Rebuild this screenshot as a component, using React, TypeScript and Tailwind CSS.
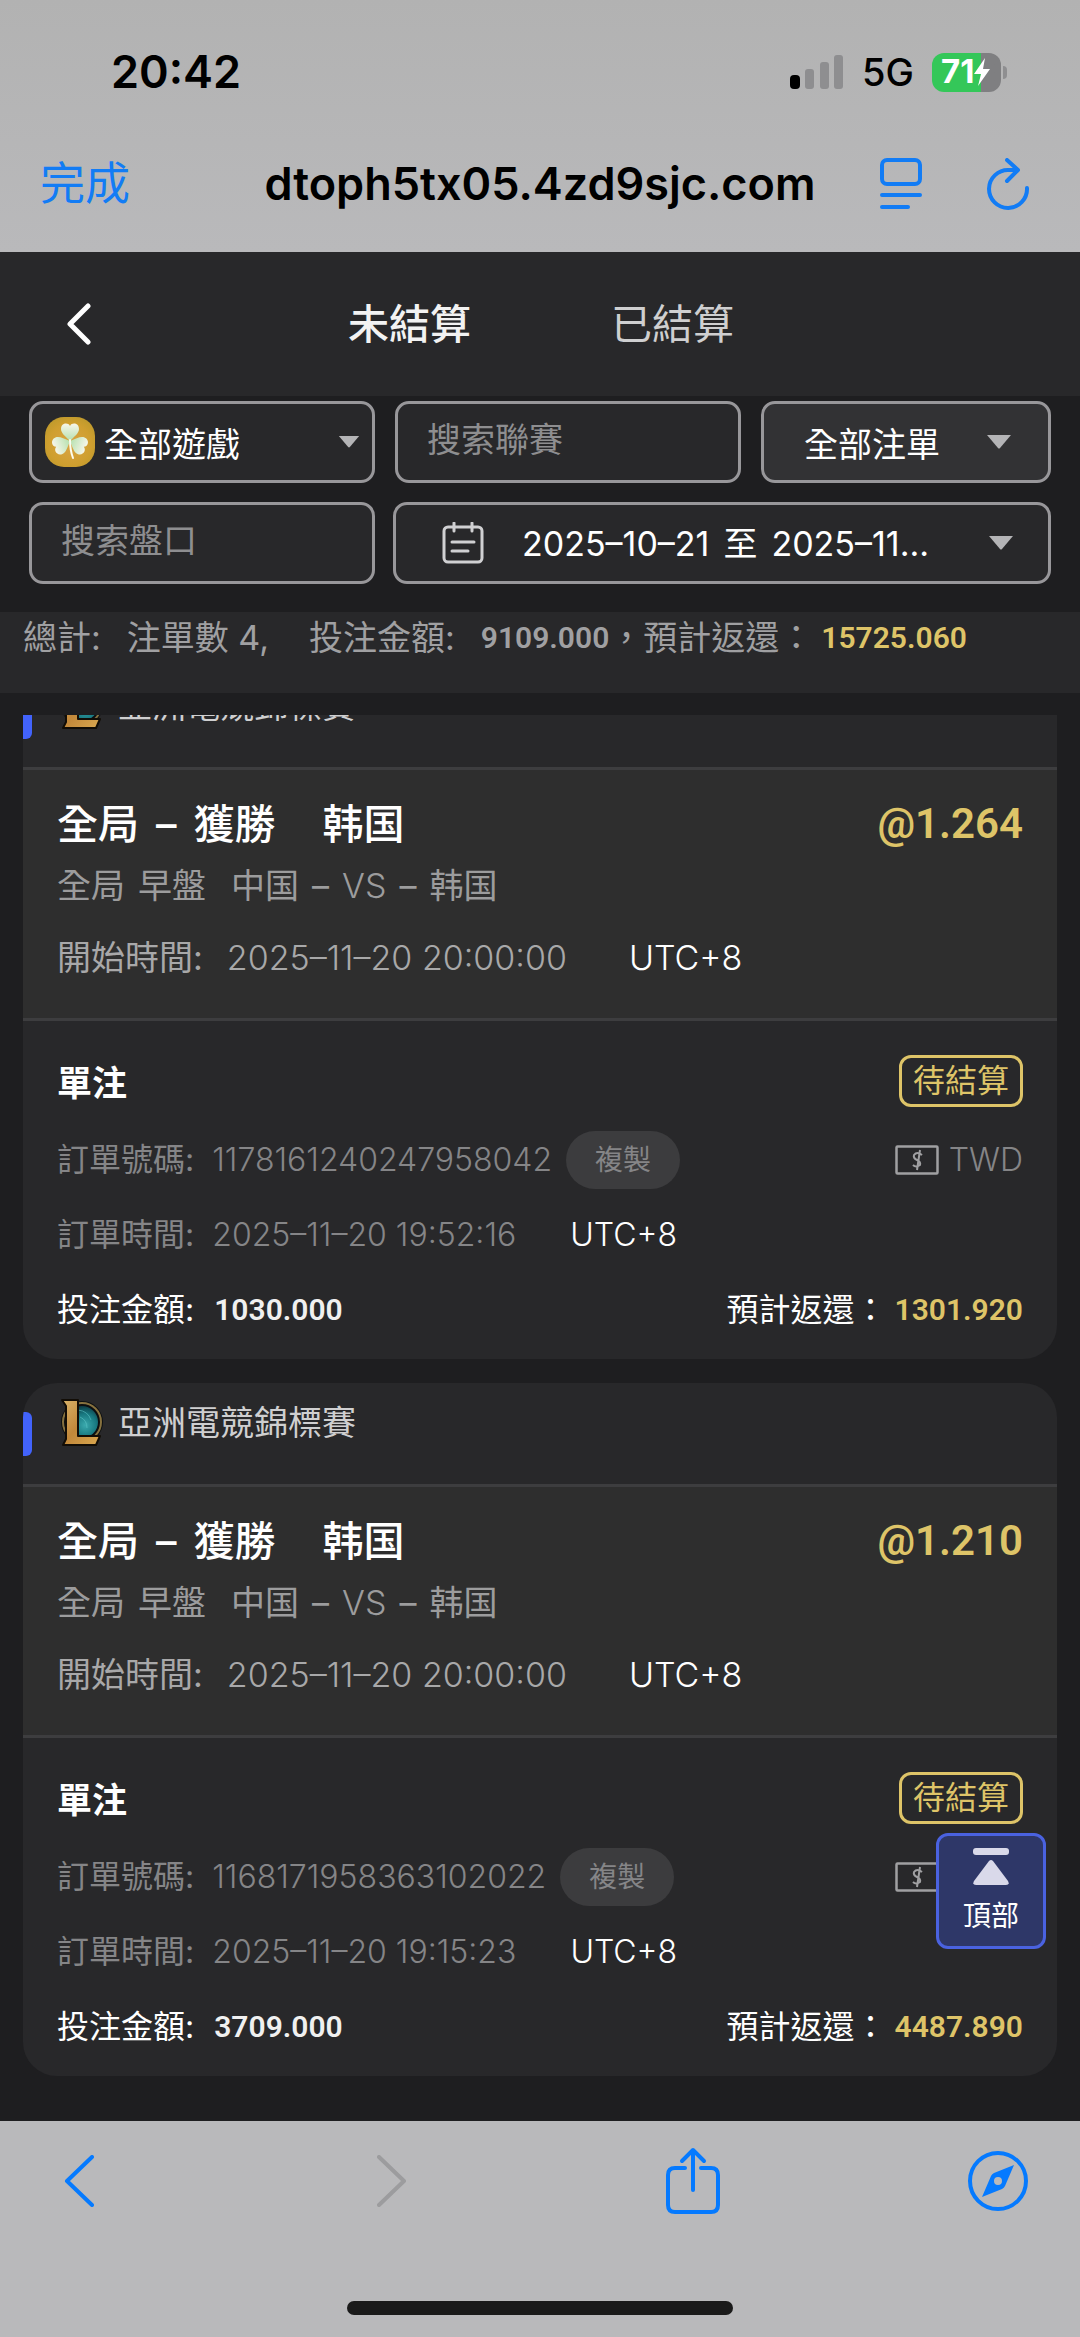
import React from "react";

type Bet = {
    id: string;
    odds: string;
    orderTime: string;
    amount: string;
    payout: string;
};

const bets: Bet[] = [
    { id: "1178161240247958042", odds: "@1.264", orderTime: "2025–11–20 19:52:16", amount: "1030.000", payout: "1301.920" },
    { id: "1168171958363102022", odds: "@1.210", orderTime: "2025–11–20 19:15:23", amount: "3709.000", payout: "4487.890" },
];

const Caret = ({ className }: { className: string }) => (
    <svg viewBox="0 0 26 14" className={className} fill="#b4b4b6"><path d="M1 0h24L14 13q-1 1-2 0z" /></svg>
);

const Clover = () => (
    <svg viewBox="0 0 50 50" className="size-[50px] shrink-0">
        <defs>
            <radialGradient id="gold" cx="0.5" cy="0.55" r="0.6">
                <stop offset="0" stopColor="#d9a445" />
                <stop offset="0.7" stopColor="#cf9f2f" />
                <stop offset="1" stopColor="#bf9a2c" />
            </radialGradient>
            <linearGradient id="leaf" x1="0" y1="0" x2="0" y2="1">
                <stop offset="0" stopColor="#f7f6ea" />
                <stop offset="1" stopColor="#b5e0ae" />
            </linearGradient>
        </defs>
        <rect width="50" height="50" rx="19" fill="url(#gold)" />
        <g fill="url(#leaf)">
            <path d="M25 24C20 19 16 16 16 12c0-6 7-7 9-3 2-4 9-3 9 3 0 4-4 7-9 12z" />
            <path transform="rotate(-113 25 24)" d="M25 24C20 19 16 16 16 12c0-6 7-7 9-3 2-4 9-3 9 3 0 4-4 7-9 12z" />
            <path transform="rotate(113 25 24)" d="M25 24C20 19 16 16 16 12c0-6 7-7 9-3 2-4 9-3 9 3 0 4-4 7-9 12z" />
        </g>
        <path d="M25 23q0 10 3 18" fill="none" stroke="#fdfdf0" strokeWidth="2" strokeLinecap="round" />
    </svg>
);

const LeagueLogo = () => (
    <svg viewBox="0 0 46 50" className="h-[50px] w-[46px]">
        <defs>
            <radialGradient id="orb" cx="0.6" cy="0.6" r="0.6">
                <stop offset="0" stopColor="#3aa9ad" />
                <stop offset="0.6" stopColor="#17777f" />
                <stop offset="1" stopColor="#0c3c45" />
            </radialGradient>
            <linearGradient id="brass" x1="0" y1="0" x2="1" y2="1">
                <stop offset="0" stopColor="#d9b36a" />
                <stop offset="0.5" stopColor="#c2883a" />
                <stop offset="1" stopColor="#dba950" />
            </linearGradient>
        </defs>
        <circle cx="24" cy="24" r="21" fill="#0c0f11" />
        <circle cx="24" cy="24" r="19" fill="none" stroke="#86713f" strokeWidth="2" />
        <circle cx="24" cy="24" r="16" fill="url(#orb)" />
        <path d="M20 12q10 1 13 10M22 19q7 3 7 11" fill="none" stroke="#5cc3c4" strokeWidth="1" opacity="0.6" />
        <path d="M4 2h16v36h22l-4 9H5l3-6V8z" fill="url(#brass)" stroke="#120d06" strokeWidth="2" strokeLinejoin="round" />
    </svg>
);

const BetCard = ({ bet }: { bet: Bet }) => (
    <article className="overflow-hidden rounded-[34px] bg-[#28282a]">
        <header className="flex h-[101px] items-center pb-[22px]">
            <span className="mt-[22px] h-[44px] w-[9px] rounded-r-[6px] bg-[#4263fb]" />
            <span className="ml-[26px]"><LeagueLogo /></span>
            <h2 className="ml-[14px] text-[34px] leading-[48px] text-[#cfcfd0]">亞洲電競錦標賽</h2>
        </header>
        <section className="border-y-[3px] border-[#3d3d3f] bg-[#2e2e2e] px-[34px] pt-[24px] pb-[28px]">
            <div className="flex items-center justify-between leading-[60px]">
                <h3 className="flex gap-[17px] text-[41px] font-medium text-white">
                    <span>全局</span><span>–</span><span>獲勝</span><span className="ml-[30px]">韩国</span>
                </h3>
                <span className="font-[Roboto,sans-serif] text-[42px] font-semibold text-[#dec468]">{bet.odds}</span>
            </div>
            <p className="flex gap-[13px] text-[34px] leading-[64px] text-[#9c9c9d]">
                <span>全局</span><span>早盤</span><span className="ml-[12px]">中国</span><span>–</span><span className="font-light">VS</span><span>–</span><span>韩国</span>
            </p>
            <p className="mt-[8px] text-[34px] leading-[64px] text-[#a8a8a9]">
                開始時間:<span className="ml-[24px] font-light">2025–11–20 20:00:00</span><span className="ml-[62px] font-light text-white">UTC+8</span>
            </p>
        </section>
        <section className="px-[34px] pt-[32px] pb-[12px] text-[32px]">
            <div className="flex h-[56px] items-center justify-between">
                <h4 className="pt-[4px] text-[35px] font-bold text-white">單注</h4>
                <span className="rounded-[12px] border-[3px] border-[#dec468] px-[11px] leading-[46px] text-[#dec468]">待結算</span>
            </div>
            <div className="mt-[13px] flex h-[75px] items-center text-[#858587]">
                <span>訂單號碼:</span>
                <span className="ml-[18px] font-light">{bet.id}</span>
                <button type="button" className="ml-[14px] h-[58px] rounded-full bg-[#3c3c3e] px-[29px] text-[28px]">複製</button>
                <svg viewBox="0 0 44 30" className="ml-auto h-[30px] w-[44px]" fill="none" stroke="#a0a0a2">
                    <rect x="1.5" y="1.5" width="41" height="27" rx="1" strokeWidth="2.5" />
                    <path d="M27 10q-5-4-8 0-1 3 3 5t3 5q-4 3-7 0M25 5l-3 20" strokeWidth="2" />
                </svg>
                <span className="ml-[10px] font-light">TWD</span>
            </div>
            <p className="h-[75px] leading-[75px] text-[#858587]">
                訂單時間:<span className="ml-[18px] font-light">{bet.orderTime}</span><span className="ml-[54px] font-light text-white">UTC+8</span>
            </p>
            <div className="flex h-[75px] items-center text-white">
                <span>投注金額:</span>
                <span className="ml-[20px] font-[Roboto,sans-serif] text-[30px] font-semibold text-[#f0f0f0]">{bet.amount}</span>
                <span className="ml-auto">預計返還：</span>
                <span className="ml-[8px] font-[Roboto,sans-serif] text-[30px] font-semibold text-[#dec468]">{bet.payout}</span>
            </div>
        </section>
    </article>
);

const App = () => {
    return <div className="flex min-h-screen flex-col bg-[#1e1e20] font-[Inter,'Noto_Sans_CJK_TC',sans-serif]">
        <div className="bg-linear-to-b from-[#b2b2b2] to-[#b9b9bb] text-black">
            <div className="flex h-[118px] items-center pt-[26px] pr-[73px] pl-[111px]">
                <span className="text-[45px] font-semibold">20:42</span>
                <svg viewBox="0 0 54 36" className="ml-auto h-[36px] w-[54px]" fill="#8e8e90">
                    <rect x="0" y="21" width="10" height="14" rx="4" fill="#000" />
                    <rect x="15" y="15" width="9" height="20" rx="3" />
                    <rect x="30" y="8" width="9" height="27" rx="3" />
                    <rect x="44" y="1" width="9" height="34" rx="3" />
                </svg>
                <span className="ml-[18px] text-[38px] font-medium">5G</span>
                <div className="ml-[18px] flex h-[39px] w-[69px] items-center rounded-[12px] bg-linear-to-r from-[#34c759] from-71% to-[#7f7f81] to-71% pl-[9px] text-white">
                    <span className="text-[33px] font-bold">71</span>
                    <svg viewBox="0 0 16 28" className="h-[28px] w-[16px]" fill="#fff"><path d="M11 0 0 16h7L4 28 16 11H9z" /></svg>
                </div>
                <span className="ml-[2px] h-[13px] w-[4px] rounded-r-full bg-[#8e8e90]" />
            </div>
            <div className="grid h-[134px] grid-cols-[1fr_auto_1fr] items-center px-[40px] pb-[3px]">
                <button type="button" className="justify-self-start text-[45px] text-[#127cf5]">完成</button>
                <span className="text-[45px] font-semibold">dtoph5tx05.4zd9sjc.com</span>
                <div className="mr-[10px] flex justify-end gap-[64px]">
                    <button type="button" aria-label="閱讀器">
                        <svg viewBox="0 0 42 52" className="h-[52px] w-[42px]" fill="none" stroke="#127cf5" strokeWidth="4" strokeLinecap="round">
                            <rect x="2" y="2" width="38" height="24" rx="5" />
                            <path d="M2 37h38M2 49h26" />
                        </svg>
                    </button>
                    <button type="button" aria-label="重新載入">
                        <svg viewBox="0 0 44 52" className="h-[52px] w-[44px]" fill="none" stroke="#127cf5" strokeWidth="4" strokeLinecap="round" strokeLinejoin="round">
                            <path d="M31 12h-8a19 19 0 1 0 18 18M21 2l11 10-11 11" />
                        </svg>
                    </button>
                </div>
            </div>
        </div>

        <nav className="flex h-[144px] items-center bg-[#28282a] pl-[67px] text-[41px]">
            <button type="button" aria-label="返回">
                <svg viewBox="0 0 24 42" className="h-[42px] w-[24px]" fill="none" stroke="#fff" strokeWidth="5" strokeLinecap="round" strokeLinejoin="round"><path d="M21 3 3 21l18 18" /></svg>
            </button>
            <button type="button" className="ml-[257px] pt-[2px] font-medium text-[#f2f2f2]">未結算</button>
            <button type="button" className="ml-[140px] pt-[2px] text-[#cfcfd0]">已結算</button>
        </nav>

        <form className="flex flex-col gap-[19px] px-[29px] pt-[5px] pb-[28px] text-[34px] text-white">
            <div className="flex gap-[20px]">
                <label className="relative flex h-[82px] w-[346px] items-center rounded-[14px] border-[3px] border-[#98979a] bg-[#28282a] pl-[13px]">
                    <Clover />
                    <select aria-label="遊戲" className="w-full appearance-none bg-transparent pt-[4px] pl-[9px] outline-none"><option>全部遊戲</option></select>
                    <Caret className="pointer-events-none absolute right-[12px] h-[12px] w-[22px]" />
                </label>
                <input aria-label="搜索聯賽" placeholder="搜索聯賽" className="h-[82px] w-[346px] rounded-[14px] border-[3px] border-[#98979a] bg-[#28282a] px-[29px] pb-[5px] outline-none placeholder:text-[#8e8e90]" />
                <label className="relative flex h-[82px] grow items-center rounded-[14px] border-[3px] border-[#98979a] bg-[#323234]">
                    <select aria-label="注單" className="w-full appearance-none bg-transparent pt-[4px] pl-[40px] outline-none"><option>全部注單</option></select>
                    <Caret className="pointer-events-none absolute right-[36px] h-[14px] w-[26px]" />
                </label>
            </div>
            <div className="flex gap-[18px]">
                <input aria-label="搜索盤口" placeholder="搜索盤口" className="h-[82px] w-[346px] rounded-[14px] border-[3px] border-[#98979a] bg-[#28282a] px-[29px] pb-[5px] outline-none placeholder:text-[#8e8e90]" />
                <button type="button" className="flex h-[82px] grow items-center rounded-[14px] border-[3px] border-[#98979a] bg-[#28282a] pr-[34px] pl-[46px]">
                    <svg viewBox="0 0 42 42" className="h-[42px] w-[42px]" fill="none" stroke="#d0d0d2" strokeWidth="3" strokeLinecap="round">
                        <rect x="2" y="5" width="38" height="35" rx="4" />
                        <path d="M12 1v8M30 1v8M10 20h22M10 29h16" />
                    </svg>
                    <span className="ml-[38px] flex gap-[14px]"><span>2025–10–21</span><span>至</span><span>2025–11...</span></span>
                    <Caret className="ml-auto h-[14px] w-[26px]" />
                </button>
            </div>
        </form>

        <div className="flex h-[81px] bg-[#28282a] pl-[23px] text-[34px] leading-[52px] whitespace-pre text-[#a0a0a2]">
            <span>總計:</span>
            <span className="ml-[26px]">注單數 4,</span>
            <span className="ml-[40px]">投注金額:</span>
            <span className="ml-[26px] font-[Roboto,sans-serif] text-[30px] font-semibold">9109.000</span>
            <span>，預計返還：</span>
            <span className="ml-[8px] font-[Roboto,sans-serif] text-[30px] font-semibold text-[#dec468]">15725.060</span>
        </div>

        <main className="mx-[23px] mt-[22px] grow overflow-hidden">
            {/* list is scrolled, the first card starts above the fold */}
            <div className="-mt-[49px] flex flex-col gap-[24px] pb-[44px]">
                {bets.map((bet) => <BetCard key={bet.id} bet={bet} />)}
            </div>
        </main>

        <button type="button" className="fixed right-[34px] bottom-[388px] flex h-[116px] w-[110px] flex-col items-center rounded-[12px] border-[3px] border-[#4a62e0] bg-[#2e3768] pt-[12px] text-white">
            <svg viewBox="0 0 36 38" className="h-[38px] w-[36px]" fill="#d9d9ea">
                <rect x="0" y="0" width="36" height="7" rx="3" />
                <path d="M16 13q2-2 4 0l15 20q2 4-2 4H3q-4 0-2-4z" />
            </svg>
            <span className="mt-[8px] text-[28px] leading-[44px]">頂部</span>
        </button>

        <footer className="flex h-[216px] flex-col items-center bg-[#b9b9bb]">
            <div className="flex w-full items-center pt-[26px] pr-[51px] pl-[64px]">
                <button type="button" aria-label="上一頁">
                    <svg viewBox="0 0 30 52" className="h-[52px] w-[30px]" fill="none" stroke="#057aff" strokeWidth="4" strokeLinecap="round" strokeLinejoin="round"><path d="M28 2 3 26l25 24" /></svg>
                </button>
                <button type="button" aria-label="下一頁" className="ml-[283px]">
                    <svg viewBox="0 0 30 52" className="h-[52px] w-[30px]" fill="none" stroke="#9c9c9e" strokeWidth="4" strokeLinecap="round" strokeLinejoin="round"><path d="M2 2l25 24L2 50" /></svg>
                </button>
                <button type="button" aria-label="分享" className="ml-auto">
                    <svg viewBox="0 0 54 68" className="h-[68px] w-[54px]" fill="none" stroke="#057aff" strokeWidth="4" strokeLinecap="round" strokeLinejoin="round">
                        <path d="M19 21H9q-7 0-7 7v30q0 7 7 7h36q7 0 7-7V28q0-7-7-7H35" />
                        <path d="M27 43V3M16 14 27 3l11 11" />
                    </svg>
                </button>
                <button type="button" aria-label="在瀏覽器中打開" className="ml-[247px]">
                    <svg viewBox="0 0 62 62" className="h-[62px] w-[62px]" fill="none" stroke="#057aff" strokeWidth="4">
                        <circle cx="31" cy="31" r="28" />
                        <path fillRule="evenodd" fill="#057aff" stroke="none" d="M47 15 38 36q-1 2-3 3L15 47l9-21q1-2 3-3zM31 27a4 4 0 1 0 0 8 4 4 0 0 0 0-8z" />
                    </svg>
                </button>
            </div>
            <div className="mt-auto mb-[22px] h-[14px] w-[386px] rounded-full bg-[#1a1a1a]" />
        </footer>
    </div>;
};

export default App;
